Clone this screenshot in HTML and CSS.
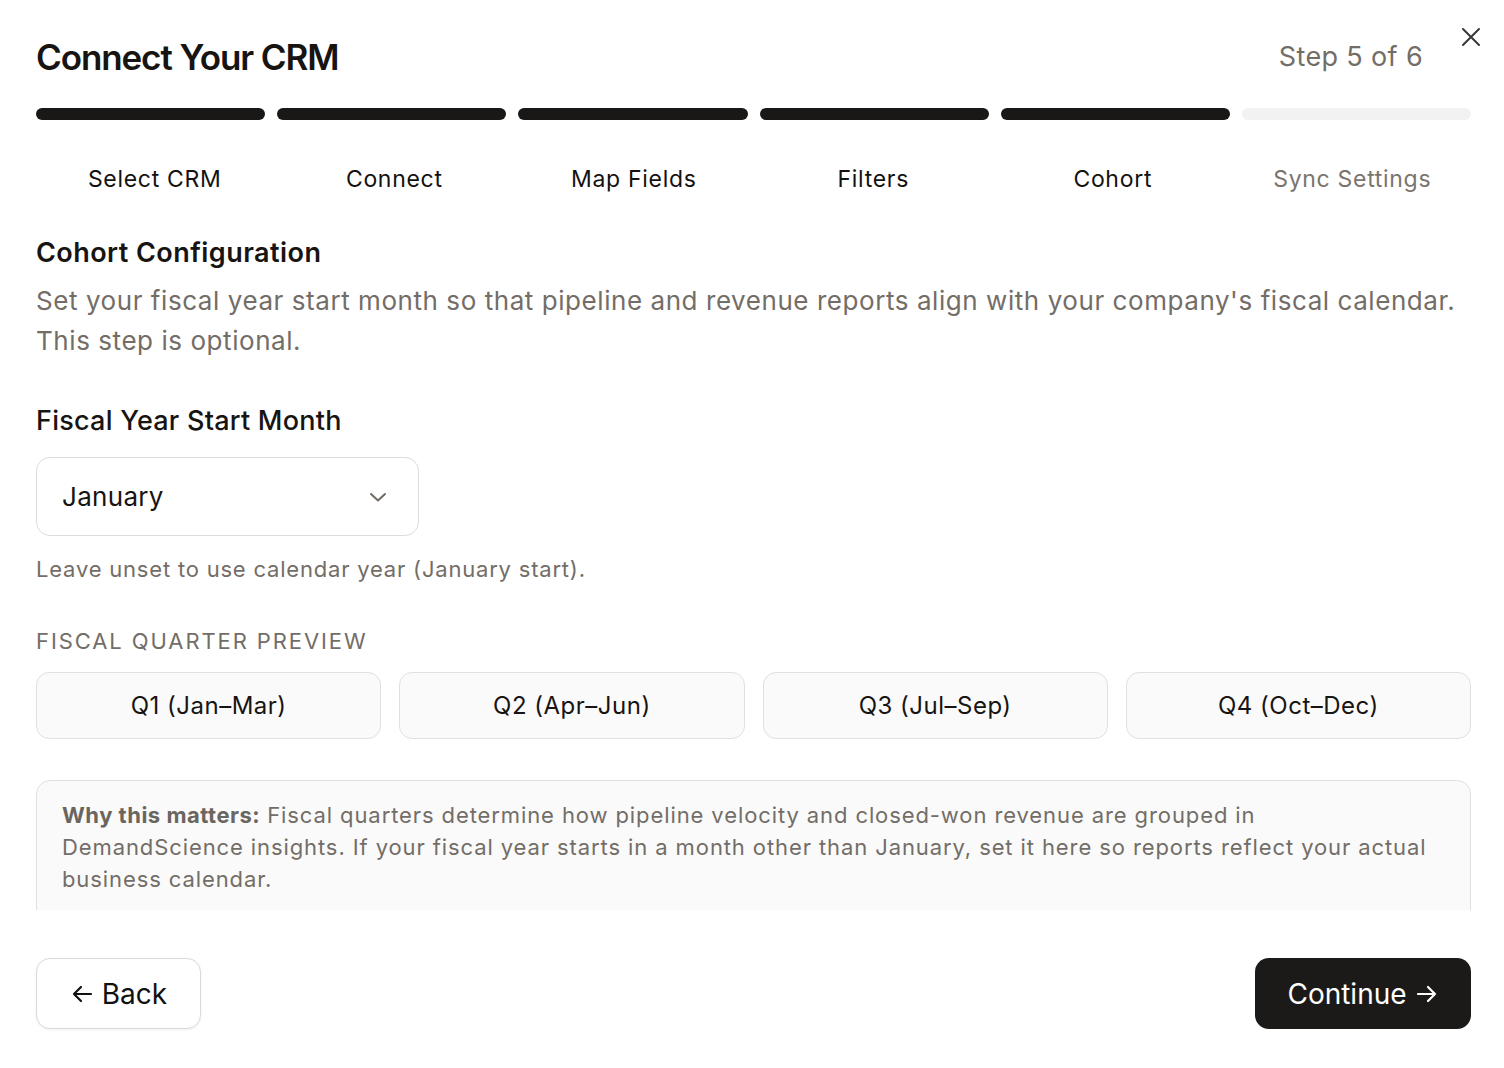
FILE: index.html
```html
<!DOCTYPE html>
<html lang="en">
<head>
<meta charset="utf-8">
<title>Connect Your CRM</title>
<link rel="stylesheet" href="styles.css">
</head>
<body>
<div class="modal">
  <header class="modal-head">
    <h1 class="title">Connect Your CRM</h1>
    <span class="step-count">Step 5 of 6</span>
    <button class="close" aria-label="Close">
      <svg width="20" height="20" viewBox="0 0 20 20" fill="none" stroke="#3a3633" stroke-width="2" stroke-linecap="round"><path d="M2 2L18 18M18 2L2 18"/></svg>
    </button>
  </header>

  <div class="progress">
    <div class="seg done"></div>
    <div class="seg done"></div>
    <div class="seg done"></div>
    <div class="seg done"></div>
    <div class="seg done"></div>
    <div class="seg"></div>
  </div>
  <div class="steps">
    <span class="step active">Select CRM</span>
    <span class="step active">Connect</span>
    <span class="step active">Map Fields</span>
    <span class="step active">Filters</span>
    <span class="step active">Cohort</span>
    <span class="step">Sync Settings</span>
  </div>

  <main class="body">
    <h2 class="section-title">Cohort Configuration</h2>
    <p class="section-desc">Set your fiscal year start month so that pipeline and revenue reports align with your company's fiscal calendar. This step is optional.</p>

    <label class="field-label">Fiscal Year Start Month</label>
    <div class="select">
      <span>January</span>
      <svg width="20" height="12" viewBox="0 0 20 12" fill="none" stroke="#6f6a64" stroke-width="2" stroke-linecap="round" stroke-linejoin="round"><path d="M3 3L10 9.5L17 3"/></svg>
    </div>
    <p class="hint">Leave unset to use calendar year (January start).</p>

    <p class="overline">Fiscal Quarter Preview</p>
    <div class="quarters">
      <div class="quarter">Q1 (Jan–Mar)</div>
      <div class="quarter">Q2 (Apr–Jun)</div>
      <div class="quarter">Q3 (Jul–Sep)</div>
      <div class="quarter">Q4 (Oct–Dec)</div>
    </div>

    <div class="note"><strong>Why this matters:</strong> Fiscal quarters determine how pipeline velocity and closed-won revenue are grouped in DemandScience insights. If your fiscal year starts in a month other than January, set it here so reports reflect your actual business calendar.</div>
  </main>

  <footer class="modal-foot">
    <button class="btn btn-back">
      <svg width="24" height="20" viewBox="0 0 24 20" fill="none" stroke="#111" stroke-width="2.2" stroke-linecap="round" stroke-linejoin="round"><path d="M21 10H4M11 3L4 10L11 17"/></svg>
      Back
    </button>
    <button class="btn btn-next">
      Continue
      <svg width="24" height="20" viewBox="0 0 24 20" fill="none" stroke="#fff" stroke-width="2.2" stroke-linecap="round" stroke-linejoin="round"><path d="M3 10H20M13 3L20 10L13 17"/></svg>
    </button>
  </footer>
</div>
</body>
</html>
```

FILE: styles.css
```css
* { box-sizing: border-box; }

html, body {
  margin: 0;
  padding: 0;
  background: #fff;
}

body {
  font-family: Inter, "Noto Sans", "Liberation Sans", sans-serif;
  color: #171412;
  width: 1504px;
  height: 1068px;
  overflow: hidden;
}

.modal {
  display: flex;
  flex-direction: column;
  height: 1068px;
  padding: 0 33px 0 36px;
}

/* header */
.modal-head {
  display: flex;
  align-items: center;
  height: 112px;
  position: relative;
  margin-bottom: -4px;
}
.title {
  margin: 0;
  font-size: 35px;
  font-weight: 600;
  letter-spacing: -1.1px;
  flex: 1;
  transform: translateY(1px);
}
.step-count {
  font-size: 27px;
  letter-spacing: 0.35px;
  color: #736d67;
  margin-right: 48px;
}
.close {
  position: absolute;
  right: -10px;
  top: 27px;
  background: none;
  border: 0;
  padding: 0;
  width: 20px;
  height: 20px;
}

/* progress */
.progress {
  display: flex;
  gap: 12px;
}
.seg {
  flex: 1;
  height: 12px;
  border-radius: 6px;
  background: #f2f2f2;
}
.seg.done { background: #1a1817; }

.steps {
  display: grid;
  grid-template-columns: repeat(6, 1fr);
  gap: 2px;
  margin-top: 45px;
}
.step {
  text-align: center;
  font-size: 23px;
  letter-spacing: 0.7px;
  color: #7a746e;
  line-height: 28px;
}
.step.active { color: #141210; }

/* scrolling body */
.body {
  height: 687px;
  overflow: hidden;
  margin-top: 30px;
  padding-top: 14px;
}
.section-title {
  margin: 0;
  font-size: 27px;
  font-weight: 600;
  line-height: 32px;
  letter-spacing: 0.45px;
}
.section-desc {
  margin: 12px 0 0;
  font-size: 26px;
  line-height: 40px;
  letter-spacing: 0.56px;
  color: #736d67;
}
.field-label {
  display: block;
  margin-top: 44px;
  font-size: 27px;
  font-weight: 500;
  line-height: 32px;
  letter-spacing: 0.25px;
  color: #171412;
}
.select {
  width: 383px;
  height: 79px;
  margin-top: 20px;
  border: 1.5px solid #dedcda;
  border-radius: 14px;
  display: flex;
  align-items: center;
  justify-content: space-between;
  padding: 0 30px 0 25px;
  font-size: 26px;
  letter-spacing: 0.3px;
}
.hint {
  margin: 19px 0 0;
  font-size: 22px;
  line-height: 28px;
  letter-spacing: 0.8px;
  color: #736d67;
}
.overline {
  margin: 44px 0 0;
  font-size: 22px;
  line-height: 28px;
  letter-spacing: 1.9px;
  text-transform: uppercase;
  color: #736d67;
}
.quarters {
  display: grid;
  grid-template-columns: repeat(4, 1fr);
  gap: 18px;
  margin-top: 17px;
}
.quarter {
  height: 67px;
  border: 1.5px solid #e2e0de;
  background: #fafafa;
  border-radius: 13px;
  display: flex;
  align-items: center;
  justify-content: center;
  font-size: 24px;
  letter-spacing: 0.5px;
  color: #171412;
}
.note {
  margin-top: 41px;
  border: 1.5px solid #e2e0de;
  background: #fafafa;
  border-radius: 14px;
  padding: 18px 40px 30px 25px;
  font-size: 22px;
  line-height: 32px;
  letter-spacing: 0.9px;
  color: #736d67;
}
.note strong {
  font-weight: 700;
  letter-spacing: 0.5px;
  color: #6b655f;
}

/* footer */
.modal-foot {
  display: flex;
  justify-content: space-between;
  align-items: flex-start;
  padding-top: 48px;
}
.btn {
  height: 71px;
  border-radius: 14px;
  font-family: inherit;
  font-size: 28px;
  display: flex;
  align-items: center;
  gap: 8px;
  cursor: pointer;
}
.btn-back {
  width: 165px;
  justify-content: center;
  background: #fff;
  border: 1.5px solid #dcdad8;
  color: #111;
  box-shadow: 0 1px 3px rgba(0,0,0,0.06);
}
.btn-next {
  width: 216px;
  justify-content: center;
  background: #1c1a19;
  border: 0;
  color: #fff;
}
```
